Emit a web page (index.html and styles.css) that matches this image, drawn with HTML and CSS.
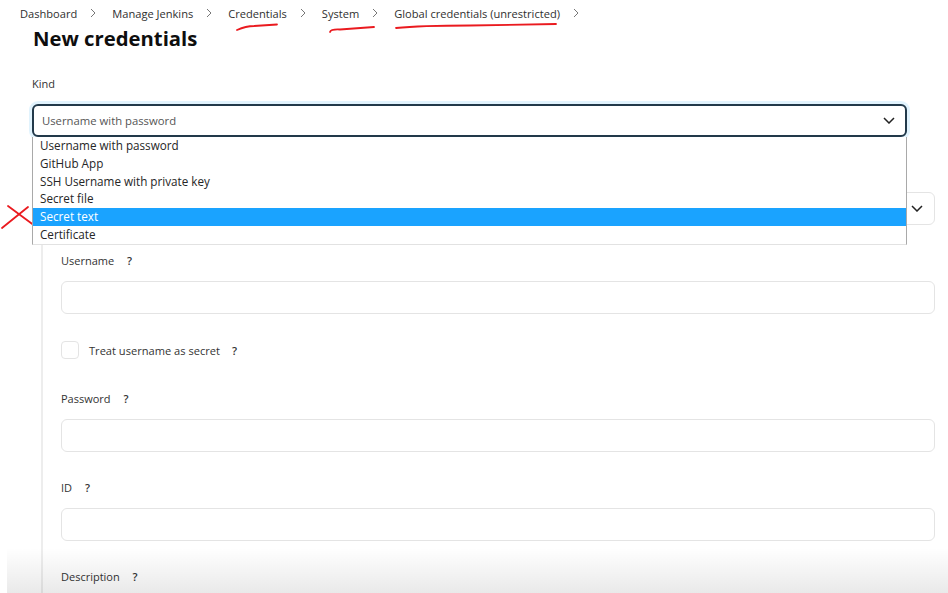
FILE: index.html
```html
<!DOCTYPE html>
<html lang="en">
<head>
<meta charset="utf-8">
<title>New credentials</title>
<link rel="stylesheet" href="styles.css">
</head>
<body>
<div class="page">
  <nav class="crumbs">
    <span class="crumb">Dashboard</span>
    <svg class="sep" viewBox="0 0 6 10" width="6" height="10"><polyline points="1,1 5,5 1,9"/></svg>
    <span class="crumb">Manage Jenkins</span>
    <svg class="sep" viewBox="0 0 6 10" width="6" height="10"><polyline points="1,1 5,5 1,9"/></svg>
    <span class="crumb">Credentials</span>
    <svg class="sep" viewBox="0 0 6 10" width="6" height="10"><polyline points="1,1 5,5 1,9"/></svg>
    <span class="crumb">System</span>
    <svg class="sep" viewBox="0 0 6 10" width="6" height="10"><polyline points="1,1 5,5 1,9"/></svg>
    <span class="crumb">Global credentials (unrestricted)</span>
    <svg class="sep" viewBox="0 0 6 10" width="6" height="10"><polyline points="1,1 5,5 1,9"/></svg>
  </nav>

  <div class="title-clip"><h1>New credentials</h1></div>

  <main class="form">
    <div class="field kind">
      <div class="label">Kind</div>
      <div class="select-wrap">
        <div class="select focused">
          <span class="value">Username with password</span>
          <svg class="chev" viewBox="0 0 12 7" width="12" height="7"><polyline points="1,1 6,6 11,1"/></svg>
        </div>
        <ul class="dropdown">
          <li>Username with password</li>
          <li>GitHub App</li>
          <li>SSH Username with private key</li>
          <li>Secret file</li>
          <li class="hl">Secret text</li>
          <li>Certificate</li>
        </ul>
      </div>
    </div>

    <section class="nested">
      <div class="field">
        <div class="label"></div>
        <div class="select plain">
          <span class="value"></span>
          <svg class="chev" viewBox="0 0 12 7" width="12" height="7"><polyline points="1,1 6,6 11,1"/></svg>
        </div>
      </div>
      <div class="field">
        <div class="label">Username <span class="help">?</span></div>
        <div class="input"></div>
      </div>
      <div class="check-row">
        <span class="box"></span>
        <span class="check-label">Treat username as secret</span>
        <span class="help">?</span>
      </div>
      <div class="field">
        <div class="label">Password <span class="help">?</span></div>
        <div class="input"></div>
      </div>
      <div class="field">
        <div class="label">ID <span class="help">?</span></div>
        <div class="input"></div>
      </div>
      <div class="field">
        <div class="label">Description <span class="help">?</span></div>
        <div class="input"></div>
      </div>
    </section>
  </main>

  <div class="bottom-fade"></div>

  <svg class="ink" viewBox="0 0 948 593" width="948" height="593">
    <path d="M237 30 Q246 26 254 26 L277 24.5"/>
    <path d="M330 32 Q331 29 340 29.5 L374 27"/>
    <path d="M396 28 Q420 25.5 470 25.5 L556 24"/>
    <path d="M8 206 L35 226"/>
    <path d="M28 207 L2 228"/>
  </svg>
  <svg class="cursor" viewBox="0 0 9 14" width="9" height="14"><path d="M1 1 L1 11 L3.5 8.8 L5.3 12.8 L6.8 12.1 L5 8.3 L8 8.3 Z"/></svg>
</div>
</body>
</html>
```
FILE: styles.css
```css
* { box-sizing: border-box; }
html, body { margin: 0; padding: 0; background: #fff; }
body {
  font-family: "Open Sans", "Noto Sans", sans-serif;
  color: #333;
}
.page {
  position: relative;
  width: 948px;
  height: 593px;
  overflow: hidden;
}

/* breadcrumbs */
.crumbs {
  height: 30px;
  padding: 0 0 4px 20px;
  display: flex;
  align-items: center;
  font-size: 11.1px;
  color: #2f2f2f;
  background: #fff;
}
.sep {
  margin: 0 16px 0 13px;
  fill: none;
  stroke: #777;
  stroke-width: 1;
}

/* title */
.title-clip {
  height: 18px;
  overflow: hidden;
  padding-left: 33px;
}
.title-clip h1 {
  margin: -3px 0 0;
  font-size: 20.3px;
  line-height: 22px;
  font-weight: 700;
  color: #0e0e0e;
}

/* form */
.form {
  padding: 0 13px 0 32px;
}
.field { margin-bottom: 26px; }
.field.kind { margin: 26px 28px 0 0; }
.label {
  height: 20px;
  line-height: 20px;
  font-size: 11px;
  margin-bottom: 10px;
  color: #333;
}
.help {
  margin-left: 10px;
  font-weight: 600;
}
.check-row .help { margin-left: 12px; }
.select-wrap { position: relative; }
.select {
  height: 33px;
  border-radius: 6px;
  display: flex;
  align-items: center;
  justify-content: space-between;
  padding: 0 10px 0 8px;
  font-size: 11.3px;
  color: #555;
  background: #fff;
}
.select.focused {
  border: 2px solid #22394a;
  box-shadow: 0 0 0 3px rgba(120, 200, 245, 0.22);
}
.select.plain {
  border: 1px solid #e4e4e4;
  padding-right: 11px;
}
.chev {
  fill: none;
  stroke: #222;
  stroke-width: 1.5;
}
.dropdown {
  position: absolute;
  z-index: 3;
  top: 100%;
  left: 0;
  right: 0;
  margin: 0;
  padding: 0;
  list-style: none;
  background: #fff;
  border: 1px solid #a9a9a9;
  border-top: none;
  border-bottom-color: #e2e2e2;
  font-size: 11.7px;
  color: #262626;
}
.dropdown li {
  height: 17.8px;
  line-height: 17.8px;
  padding-left: 7px;
}
.dropdown li.hl {
  background: #1aa3ff;
  color: #fff;
}

.nested {
  margin: 13px 0 0 9px;
  padding: 12px 0 0 18px;
  border-left: 2px solid #ededed;
  min-height: 500px;
}
.input {
  height: 33px;
  border: 1px solid #e4e4e4;
  border-radius: 6px;
  background: #fff;
}
.check-row {
  height: 20px;
  display: flex;
  align-items: center;
  font-size: 11.1px;
  margin-bottom: 29px;
}
.check-row .box {
  width: 18px;
  height: 18px;
  border: 1px solid #e4e4e4;
  border-radius: 4px;
  margin-right: 10px;
}

/* overlays */
.bottom-fade {
  position: absolute;
  left: 7px;
  right: 0;
  bottom: 0;
  height: 45px;
  background: linear-gradient(to bottom, rgba(0,0,0,0), rgba(0,0,0,0.085));
  pointer-events: none;
}
.ink {
  position: absolute;
  left: 0;
  top: 0;
  fill: none;
  stroke: #ea1a1f;
  stroke-width: 1.8;
  stroke-linecap: round;
  pointer-events: none;
}
.cursor {
  position: absolute;
  left: 88px;
  top: 215px;
  fill: rgba(255,255,255,0.85);
  stroke: rgba(60,60,60,0.6);
  stroke-width: 0.8;
}
```
